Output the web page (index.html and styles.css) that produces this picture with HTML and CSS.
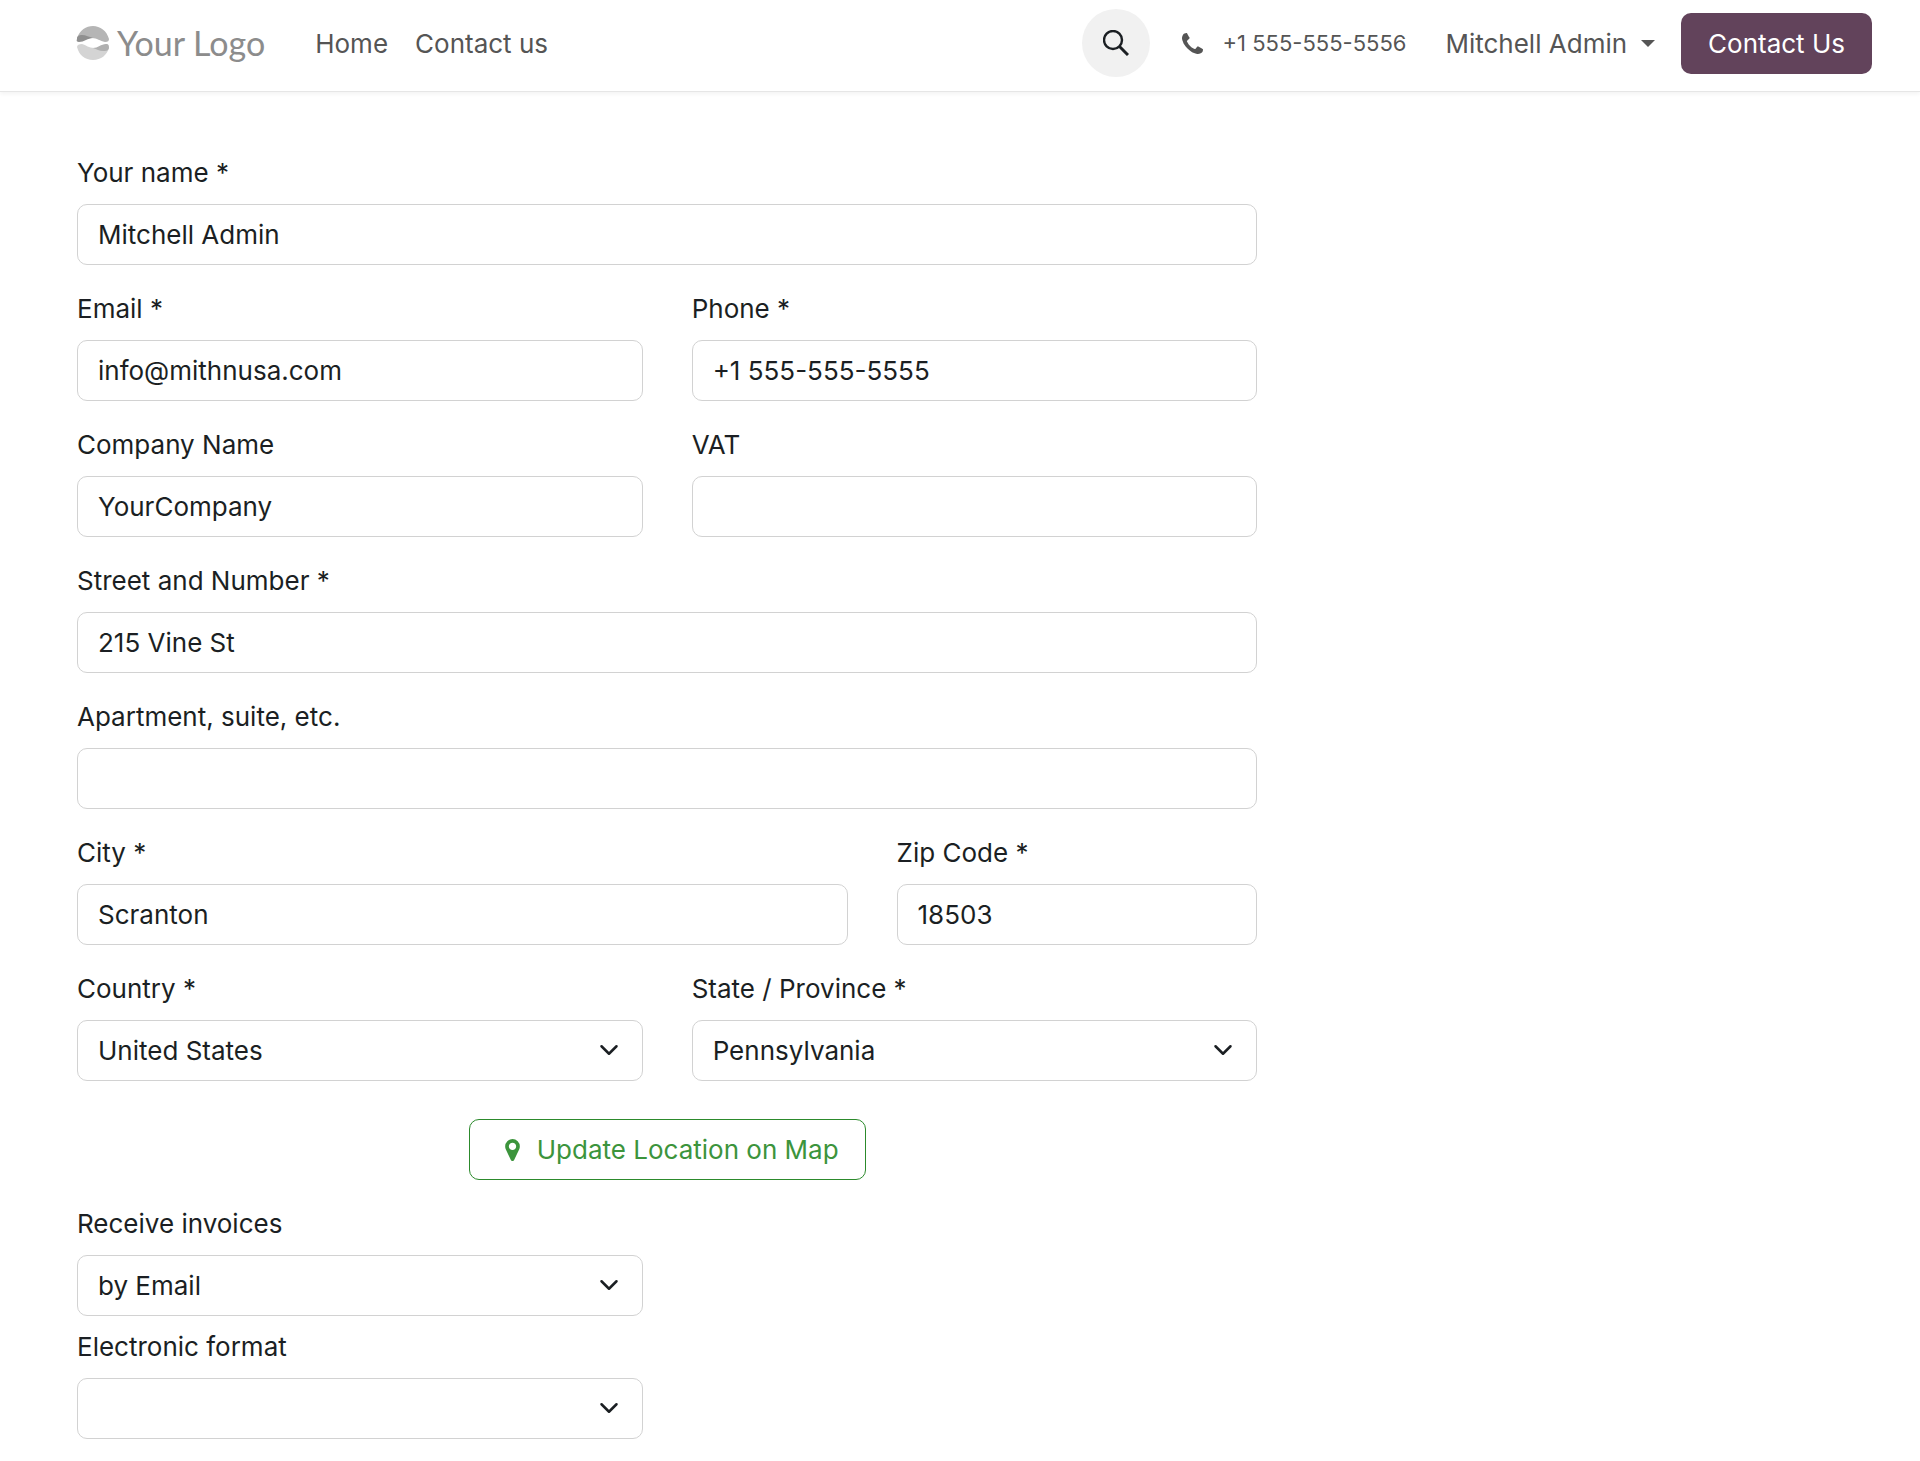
FILE: index.html
```html
<!DOCTYPE html>
<html lang="en">
<head>
  <meta charset="UTF-8">
  <meta name="viewport" content="width=device-width, initial-scale=1.0">
  <title>My Details</title>
  <link rel="stylesheet" href="styles.css">
</head>
<body>
  <header class="navbar">
    <a href="#" class="logo">
      <svg class="logo-mark" viewBox="0 0 34 34">
        <path d="M1 12 C4 4 10 0 17 0 C24 0 31 5 33 13 C33 15 32 16 29 16 C24 15 21 12 16 12 Z" fill="#b5b5b5"/>
        <path d="M1 13 C1 10 3 9 6 9 C10 9 13 11 17 12 C12 12 8 16 3 16 C1 16 0 15 1 13 Z" fill="#8f8f8f"/>
        <path d="M1 21 C1 19 3 18 6 18 C10 19 13 22 18 22 L33 22 C31 29 25 34 17 34 C9 34 3 29 1 21 Z" fill="#d4d4d4"/>
        <path d="M17 22 C22 22 25 18 30 18 C33 18 33 20 33 22 C32 25 30 25 27 25 C23 25 21 23 17 22 Z" fill="#b0b0b0"/>
      </svg>
      <span>Your Logo</span>
    </a>
    <nav class="nav-links">
      <a href="#">Home</a>
      <a href="#">Contact us</a>
    </nav>
    <div class="nav-right">
      <button class="search-btn" aria-label="Search">
        <svg viewBox="0 0 26 26">
          <circle cx="10" cy="10" r="9" fill="none" stroke="#1b1f23" stroke-width="2.4"/>
          <path d="M16.5 16.5 L25 25" stroke="#1b1f23" stroke-width="3"/>
        </svg>
      </button>
      <a href="#" class="phone">
        <svg viewBox="0 0 1408 1408">
          <path d="M1408 1112q0 27-10 70.500t-21 68.500q-21 50-122 106-94 51-186 51-27 0-53-3.500t-57.500-12.500-47-14.500-55.500-20.500-49-18q-98-35-175-83-127-79-264-216t-216-264q-48-77-83-175-3-9-18-49t-20.500-55.500-14.500-47-12.500-57.500-3.500-53q0-92 51-186 56-101 106-122 25-11 68.500-21t70.500-10q14 0 21 3 18 6 53 76 11 19 30 54t35 63.500 31 53.500q3 4 17.500 25t21.500 35.500 7 28.500q0 20-28.500 50t-62 55-62 53-28.500 46q0 9 5 22.500t8.500 20.500 14 24 11.500 19q76 137 174 235t235 174q2 1 19 11.500t24 14 20.500 8.500 22.500 5q18 0 46-28.500t53-62 55-62 50-28.500q14 0 28.500 7t35.500 21.500 25 17.500q25 15 53.500 31t63.500 35 54 30q70 35 76 53 3 7 3 21z" fill="#555"/>
        </svg>
        <span>+1 555-555-5556</span>
      </a>
      <button class="user-menu">Mitchell Admin <span class="caret"></span></button>
      <a href="#" class="contact-btn">Contact Us</a>
    </div>
  </header>

  <main class="container">
    <form class="address-form">
      <div class="field">
        <label for="name">Your name *</label>
        <input type="text" id="name" value="Mitchell Admin">
      </div>
      <div class="field half">
        <label for="email">Email *</label>
        <input type="email" id="email" value="info@mithnusa.com">
      </div>
      <div class="field half">
        <label for="phone">Phone *</label>
        <input type="tel" id="phone" value="+1 555-555-5555">
      </div>
      <div class="field half">
        <label for="company">Company Name</label>
        <input type="text" id="company" value="YourCompany">
      </div>
      <div class="field half">
        <label for="vat">VAT</label>
        <input type="text" id="vat">
      </div>
      <div class="field">
        <label for="street">Street and Number *</label>
        <input type="text" id="street" value="215 Vine St">
      </div>
      <div class="field">
        <label for="street2">Apartment, suite, etc.</label>
        <input type="text" id="street2">
      </div>
      <div class="field city">
        <label for="city">City *</label>
        <input type="text" id="city" value="Scranton">
      </div>
      <div class="field zip">
        <label for="zip">Zip Code *</label>
        <input type="text" id="zip" value="18503">
      </div>
      <div class="field half">
        <label for="country">Country *</label>
        <div class="select">
          <select id="country"><option>United States</option></select>
          <svg viewBox="0 0 16 16"><path d="M2 5l6 6 6-6"/></svg>
        </div>
      </div>
      <div class="field half">
        <label for="state">State / Province *</label>
        <div class="select">
          <select id="state"><option>Pennsylvania</option></select>
          <svg viewBox="0 0 16 16"><path d="M2 5l6 6 6-6"/></svg>
        </div>
      </div>
      <div class="map-row">
        <button type="button" class="map-btn">
          <svg viewBox="0 0 1024 1536">
            <path d="M768 512q0-106-75-181t-181-75-181 75-75 181 75 181 181 75 181-75 75-181zm256 0q0 109-33 179l-364 774q-16 33-47.500 52t-67.500 19-67.500-19-46.500-52l-365-774q-33-70-33-179 0-212 150-362t362-150 362 150 150 362z" fill="currentColor"/>
          </svg>
          Update Location on Map
        </button>
      </div>
      <div class="invoicing half">
        <div class="field">
          <label for="invoices">Receive invoices</label>
          <div class="select">
            <select id="invoices"><option>by Email</option></select>
            <svg viewBox="0 0 16 16"><path d="M2 5l6 6 6-6"/></svg>
          </div>
        </div>
        <div class="field">
          <label for="format">Electronic format</label>
          <div class="select">
            <select id="format"><option></option></select>
            <svg viewBox="0 0 16 16"><path d="M2 5l6 6 6-6"/></svg>
          </div>
        </div>
      </div>
    </form>
  </main>
</body>
</html>
```
FILE: styles.css
```css
* {
  box-sizing: border-box;
}
body {
  margin: 0;
  font-family: Inter, sans-serif;
  font-size: 26px;
  line-height: 39px;
  color: #1b1f23;
  background: #fff;
}
a {
  color: inherit;
  text-decoration: none;
}
button, input, select {
  font: inherit;
  color: inherit;
}
.navbar {
  display: flex;
  align-items: center;
  padding: 9px 48px 14px 76px;
  color: #555;
  border-bottom: 1px solid #e6e6e6;
  box-shadow: 0 2px 4px rgba(0, 0, 0, 0.05);
}
.logo {
  display: flex;
  align-items: center;
  gap: 7px;
  margin-right: 50px;
  font-family: Lato, sans-serif;
  font-size: 34px;
  line-height: 36px;
  color: #8c8c8c;
}
.logo-mark {
  width: 34px;
  height: 34px;
}
.nav-links {
  display: flex;
  gap: 27px;
}
.nav-right {
  display: flex;
  align-items: center;
  margin-left: auto;
}
.search-btn {
  display: flex;
  align-items: center;
  justify-content: center;
  width: 68px;
  height: 68px;
  padding: 0;
  border: none;
  border-radius: 50%;
  background: #f1f1f1;
  cursor: pointer;
}
.search-btn svg {
  width: 26px;
  height: 26px;
}
.phone {
  display: flex;
  align-items: center;
  gap: 20px;
  margin: 0 39px 0 32px;
  font-size: 22px;
}
.phone svg {
  width: 21px;
  height: 21px;
}
.user-menu {
  display: flex;
  align-items: center;
  gap: 14px;
  margin-right: 26px;
  padding: 0;
  border: none;
  background: none;
  cursor: pointer;
}
.caret {
  border-top: 7px solid;
  border-left: 7px solid transparent;
  border-right: 7px solid transparent;
}
.contact-btn {
  padding: 11px 27px;
  border-radius: 10px;
  background: #62435b;
  color: #fff;
}
.container {
  display: grid;
  grid-template-columns: repeat(3, 1fr);
  gap: 49px;
  padding: 61px 48px 20px 77px;
}
.address-form {
  grid-column: span 2;
  display: grid;
  grid-template-columns: repeat(6, 1fr);
  gap: 24px 49px;
}
.field {
  grid-column: span 6;
}
.half {
  grid-column: span 3;
}
.city {
  grid-column: span 4;
}
.zip {
  grid-column: span 2;
}
label {
  display: block;
  margin-bottom: 12px;
}
input, select {
  display: block;
  width: 100%;
  height: 61px;
  padding: 0 20px;
  border: 1px solid #d2d2d2;
  border-radius: 10px;
  background: #fff;
}
.select {
  position: relative;
}
select {
  appearance: none;
}
.select svg {
  position: absolute;
  top: 20px;
  right: 24px;
  width: 20px;
  height: 20px;
  fill: none;
  stroke: #1b1f23;
  stroke-width: 2;
  stroke-linecap: round;
  stroke-linejoin: round;
  pointer-events: none;
}
.map-row {
  grid-column: span 6;
  display: flex;
  justify-content: center;
  padding-top: 14px;
}
.map-btn {
  display: flex;
  align-items: center;
  gap: 17px;
  height: 61px;
  padding: 0 26px 0 35px;
  border: 1px solid #2c8a2c;
  border-radius: 10px;
  background: #fff;
  color: #3c943c;
  cursor: pointer;
}
.map-btn svg {
  width: 15px;
  height: 22px;
}
.invoicing {
  display: grid;
  gap: 11px;
}
```
